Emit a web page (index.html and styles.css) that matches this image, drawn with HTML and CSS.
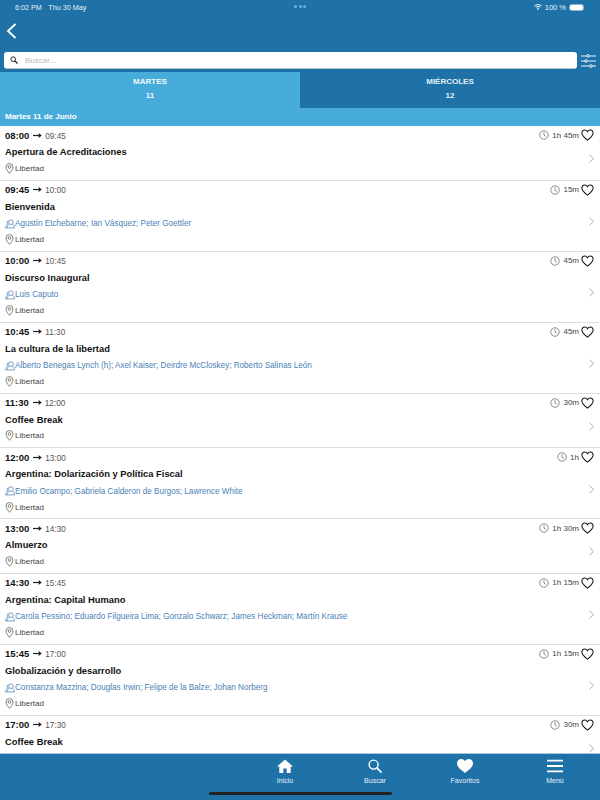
FILE: index.html
```html
<!DOCTYPE html>
<html lang="es">
<head>
<meta charset="utf-8">
<title>Agenda</title>
<link rel="stylesheet" href="styles.css">
</head>
<body>
<svg class="defs" width="0" height="0" aria-hidden="true">
  <symbol id="clock" viewBox="0 0 12 12"><circle cx="6" cy="6" r="5.100" fill="none" stroke="#555" stroke-width=".8"/><path d="M6 2.600V6.200L8.200 7.800" fill="none" stroke="#555" stroke-width=".8"/></symbol>
  <symbol id="heart" viewBox="0 0 14 13"><path d="M7 12C3 8.900 1 7 .9 4.500.8 2.500 2.200 1 4 1c1.300 0 2.400.7 3 1.900C7.600 1.700 8.700 1 10 1c1.800 0 3.200 1.500 3.100 3.500C13 7 11 8.900 7 12Z" fill="none" stroke="#111" stroke-width="1.100"/></symbol>
  <symbol id="pin" viewBox="0 0 9 12"><path d="M4.500 11.300C2.300 8.600.7 6.700.7 4.400a3.800 3.800 0 0 1 7.600 0c0 2.300-1.600 4.200-3.800 6.900Z" fill="none" stroke="#555" stroke-width=".8"/><circle cx="4.500" cy="4.300" r="1.500" fill="none" stroke="#555" stroke-width=".8"/></symbol>
  <symbol id="people" viewBox="0 0 11 11"><g fill="none" stroke="#4a7fb5" stroke-width=".8"><circle cx="6.500" cy="3.500" r="2.600"/><path d="M4.800 5.700C3.300 6.500 2.700 7.700 2.500 9.800H10.500C10.300 7.700 9.700 6.500 8.200 5.700"/><path d="M3.600 1.500C2.200 2.300 2 4.600 3.200 5.400 1.600 6.200.8 7.500.6 9.800H2.500"/></g></symbol>
  <symbol id="arrow" viewBox="0 0 9 7"><path d="M0 3.500H7" stroke="#222" stroke-width="1.200"/><path d="M5.600 1 8.800 3.500 5.600 6Z" fill="#222"/></symbol>
  <symbol id="chev" viewBox="0 0 5 9"><path d="M.6.6 4.400 4.500.6 8.400" fill="none" stroke="#999" stroke-width=".8"/></symbol>
</svg>
<div class="screen">
  <header class="top">
    <div class="status">
      <div class="status-left"><span>6:02 PM</span><span>Thu 30 May</span></div>
      <div class="dots"><i></i><i></i><i></i></div>
      <div class="status-right">
        <svg class="wifi" viewBox="0 0 12 9"><g fill="none" stroke="#fff" stroke-width="1.500"><path d="M.7 3.100C3.700.2 8.300.2 11.300 3.100"/><path d="M2.700 5.100C4.600 3.400 7.400 3.400 9.300 5.100"/></g><path d="M6 9 4.300 7C5.300 6.200 6.700 6.200 7.700 7Z" fill="#fff"/></svg>
        <span>100 %</span>
        <span class="battery"><b></b></span>
      </div>
    </div>
    <div class="nav">
      <svg class="back" viewBox="0 0 11 16"><path d="M9.500 1 2 8l7.500 7" fill="none" stroke="#fff" stroke-width="1.800"/></svg>
    </div>
    <div class="searchrow">
      <div class="search">
        <svg class="lens" viewBox="0 0 9 9"><circle cx="3.600" cy="3.600" r="2.600" fill="none" stroke="#222" stroke-width="1.100"/><path d="M5.500 5.500 8.500 8.500" stroke="#222" stroke-width="1.400"/></svg>
        <span class="placeholder">Buscar...</span>
      </div>
      <svg class="sliders" viewBox="0 0 15 14"><g stroke="#fff" stroke-width=".9" fill="#1f72a8"><path d="M0 2H15M0 7H15M0 12H15"/><circle cx="7" cy="1.900" r="1.300"/><circle cx="5" cy="7" r="1.300"/><circle cx="10" cy="12.100" r="1.300"/></g></svg>
    </div>
  </header>
  <nav class="tabs">
    <div class="tab active"><span>MARTES</span><span>11</span></div>
    <div class="tab"><span>MIÉRCOLES</span><span>12</span></div>
  </nav>
  <div class="dayhead">Martes 11 de Junio</div>
  <main class="list">
    <article class="row">
      <div class="times"><b>08:00</b><svg class="arrow"><use href="#arrow"/></svg><span>09:45</span><div class="dur"><svg class="clock"><use href="#clock"/></svg><span>1h 45m</span><svg class="heart"><use href="#heart"/></svg></div></div>
      <div class="body"><div class="info"><h3>Apertura de Acreditaciones</h3><p class="place"><svg class="pin"><use href="#pin"/></svg>Libertad</p></div><svg class="chev"><use href="#chev"/></svg></div>
    </article>
    <article class="row">
      <div class="times"><b>09:45</b><svg class="arrow"><use href="#arrow"/></svg><span>10:00</span><div class="dur"><svg class="clock"><use href="#clock"/></svg><span>15m</span><svg class="heart"><use href="#heart"/></svg></div></div>
      <div class="body"><div class="info"><h3>Bienvenida</h3><p class="who"><svg class="people"><use href="#people"/></svg>Agustín Etchebarne; Ian Vásquez; Peter Goettler</p><p class="place"><svg class="pin"><use href="#pin"/></svg>Libertad</p></div><svg class="chev"><use href="#chev"/></svg></div>
    </article>
    <article class="row">
      <div class="times"><b>10:00</b><svg class="arrow"><use href="#arrow"/></svg><span>10:45</span><div class="dur"><svg class="clock"><use href="#clock"/></svg><span>45m</span><svg class="heart"><use href="#heart"/></svg></div></div>
      <div class="body"><div class="info"><h3>Discurso Inaugural</h3><p class="who"><svg class="people"><use href="#people"/></svg>Luis Caputo</p><p class="place"><svg class="pin"><use href="#pin"/></svg>Libertad</p></div><svg class="chev"><use href="#chev"/></svg></div>
    </article>
    <article class="row">
      <div class="times"><b>10:45</b><svg class="arrow"><use href="#arrow"/></svg><span>11:30</span><div class="dur"><svg class="clock"><use href="#clock"/></svg><span>45m</span><svg class="heart"><use href="#heart"/></svg></div></div>
      <div class="body"><div class="info"><h3>La cultura de la libertad</h3><p class="who"><svg class="people"><use href="#people"/></svg>Alberto Benegas Lynch (h); Axel Kaiser; Deirdre McCloskey; Roberto Salinas León</p><p class="place"><svg class="pin"><use href="#pin"/></svg>Libertad</p></div><svg class="chev"><use href="#chev"/></svg></div>
    </article>
    <article class="row">
      <div class="times"><b>11:30</b><svg class="arrow"><use href="#arrow"/></svg><span>12:00</span><div class="dur"><svg class="clock"><use href="#clock"/></svg><span>30m</span><svg class="heart"><use href="#heart"/></svg></div></div>
      <div class="body"><div class="info"><h3>Coffee Break</h3><p class="place"><svg class="pin"><use href="#pin"/></svg>Libertad</p></div><svg class="chev"><use href="#chev"/></svg></div>
    </article>
    <article class="row">
      <div class="times"><b>12:00</b><svg class="arrow"><use href="#arrow"/></svg><span>13:00</span><div class="dur"><svg class="clock"><use href="#clock"/></svg><span>1h</span><svg class="heart"><use href="#heart"/></svg></div></div>
      <div class="body"><div class="info"><h3>Argentina: Dolarización y Política Fiscal</h3><p class="who"><svg class="people"><use href="#people"/></svg>Emilio Ocampo; Gabriela Calderon de Burgos; Lawrence White</p><p class="place"><svg class="pin"><use href="#pin"/></svg>Libertad</p></div><svg class="chev"><use href="#chev"/></svg></div>
    </article>
    <article class="row">
      <div class="times"><b>13:00</b><svg class="arrow"><use href="#arrow"/></svg><span>14:30</span><div class="dur"><svg class="clock"><use href="#clock"/></svg><span>1h 30m</span><svg class="heart"><use href="#heart"/></svg></div></div>
      <div class="body"><div class="info"><h3>Almuerzo</h3><p class="place"><svg class="pin"><use href="#pin"/></svg>Libertad</p></div><svg class="chev"><use href="#chev"/></svg></div>
    </article>
    <article class="row">
      <div class="times"><b>14:30</b><svg class="arrow"><use href="#arrow"/></svg><span>15:45</span><div class="dur"><svg class="clock"><use href="#clock"/></svg><span>1h 15m</span><svg class="heart"><use href="#heart"/></svg></div></div>
      <div class="body"><div class="info"><h3>Argentina: Capital Humano</h3><p class="who"><svg class="people"><use href="#people"/></svg>Carola Pessino; Eduardo Filgueira Lima; Gonzalo Schwarz; James Heckman; Martín Krause</p><p class="place"><svg class="pin"><use href="#pin"/></svg>Libertad</p></div><svg class="chev"><use href="#chev"/></svg></div>
    </article>
    <article class="row">
      <div class="times"><b>15:45</b><svg class="arrow"><use href="#arrow"/></svg><span>17:00</span><div class="dur"><svg class="clock"><use href="#clock"/></svg><span>1h 15m</span><svg class="heart"><use href="#heart"/></svg></div></div>
      <div class="body"><div class="info"><h3>Globalización y desarrollo</h3><p class="who"><svg class="people"><use href="#people"/></svg>Constanza Mazzina; Douglas Irwin; Felipe de la Balze; Johan Norberg</p><p class="place"><svg class="pin"><use href="#pin"/></svg>Libertad</p></div><svg class="chev"><use href="#chev"/></svg></div>
    </article>
    <article class="row">
      <div class="times"><b>17:00</b><svg class="arrow"><use href="#arrow"/></svg><span>17:30</span><div class="dur"><svg class="clock"><use href="#clock"/></svg><span>30m</span><svg class="heart"><use href="#heart"/></svg></div></div>
      <div class="body"><div class="info"><h3>Coffee Break</h3><p class="place"></p></div><svg class="chev"><use href="#chev"/></svg></div>
    </article>
  </main>
  <footer class="foot">
    <div class="foot-tab">
      <svg viewBox="0 0 16 14" class="ico"><path d="M8 .5 0 7.500h2.300V14h4V9.500h3.400V14h4V7.500H16Z" fill="#fff"/></svg><span>Inicio</span>
    </div>
    <div class="foot-tab">
      <svg viewBox="0 0 15 15" class="ico"><circle cx="6" cy="6" r="4.800" fill="none" stroke="#fff" stroke-width="1.500"/><path d="M9.500 9.500 14.500 14.500" stroke="#fff" stroke-width="1.800"/></svg><span>Buscar</span>
    </div>
    <div class="foot-tab">
      <svg viewBox="0 0 16 14" class="ico"><path d="M8 14C3 10.200 0 7.800 0 4.300 0 1.800 1.900 0 4.200 0 5.800 0 7.200.8 8 2.200 8.800.8 10.200 0 11.800 0 14.100 0 16 1.800 16 4.300 16 7.800 13 10.200 8 14Z" fill="#fff"/></svg><span>Favoritos</span>
    </div>
    <div class="foot-tab">
      <svg viewBox="0 0 15 12" class="ico"><path d="M0 1H15M0 6H15M0 11H15" stroke="#fff" stroke-width="1.700"/></svg><span>Menú</span>
    </div>
    <div class="homebar"></div>
  </footer>
</div>
</body>
</html>
```
FILE: styles.css
```css
* { box-sizing: border-box; }
html, body { margin: 0; padding: 0; }
body { font-family: "Liberation Sans", Arial, sans-serif; background: #fff; }
.defs { position: absolute; }
.screen { width: 600px; height: 800px; display: flex; flex-direction: column; overflow: hidden; }

.top { background: #1f72a8; height: 72px; flex: none; color: #fff; }
.status { height: 14px; display: flex; align-items: center; justify-content: space-between; padding: 0 8px 0 15px; font-size: 7.200px; position: relative; color: #e8f1f7; }
.status-left { display: flex; gap: 6.500px; }
.dots { position: absolute; left: 294px; top: 5px; display: flex; gap: 1.500px; }
.dots i { width: 3px; height: 3px; border-radius: 50%; background: #6db5e0; }
.status-right { display: flex; align-items: center; gap: 3px; padding-right: 8px; font-size: 7.500px; }
.wifi { width: 8px; height: 6px; }
.battery { width: 15px; height: 7px; border: 1px solid #8fb6d2; border-radius: 2.500px; display: block; }
.battery b { display: block; height: 100%; background: #fff; border-radius: 1.500px; }
.nav { height: 38px; padding: 0 0 5px 6px; display: flex; align-items: center; }
.back { width: 11px; height: 16px; }
.searchrow { height: 17px; margin-bottom: 3px; display: flex; align-items: center; padding-left: 4px; gap: 4px; }
.search { width: 573px; height: 17px; background: #fff; border-radius: 3px; border-bottom: 1px solid #b8c4d0; display: flex; align-items: center; padding-left: 6px; }
.lens { width: 8px; height: 8px; }
.placeholder { font-size: 8px; color: #bbb; margin-left: 7px; }
.sliders { width: 15px; height: 14px; }

.tabs { display: flex; height: 36px; flex: none; background: #1f72a8; }
.tab { width: 300px; display: flex; flex-direction: column; align-items: center; color: #e6eff6; font-size: 8px; font-weight: 700; padding-top: 5px; line-height: 9px; gap: 5px; }
.tab.active { background: #47acd9; color: #f1f8fc; }
.dayhead { height: 18px; flex: none; background: #47acd9; color: #fff; font-size: 8px; font-weight: 700; line-height: 17px; padding-left: 5px; }

.list { flex: 1; overflow: hidden; background: #fff; min-height: 0; }
.row { border-bottom: 1px solid #ddd; padding: 0 6px 3px 5px; }
.times { height: 18px; display: flex; align-items: center; font-size: 8.200px; color: #555; }
.times > span { margin-top: 2px; }
.times b { font-size: 9.500px; color: #111; font-weight: 700; }
.arrow { width: 9px; height: 7px; margin: 0 3px 0 4px; }
.dur { margin-left: auto; display: flex; align-items: center; color: #444; font-size: 8px; }
.clock { width: 10px; height: 10px; margin-right: 3px; }
.heart { width: 13px; height: 12px; margin-left: 2px; }
.body { display: flex; align-items: center; }
.info { flex: 1; min-width: 0; }
.row h3 { margin: 0; padding-top: 1px; font-size: 9.350px; font-weight: 700; color: #111; line-height: 14px; }
.who, .place { margin: 0; display: flex; align-items: center; font-size: 8.150px; height: 16px; }
.who { color: #4a7fb5; margin-top: 2px; }
.place { color: #444; font-size: 8px; }
h3 + .place { margin-top: 1px; margin-bottom: .6px; }
.pin { width: 9px; height: 11px; margin-right: 1px; flex: none; }
.people { width: 10px; height: 10px; flex: none; }
.chev { width: 5px; height: 9px; margin: 0 0 3px; flex: none; }

.foot { height: 47px; flex: none; background: #1f72a8; border-top: 1px solid #a9c6da; display: flex; padding: 5px 0 0 240px; position: relative; }
.foot-tab { width: 90px; display: flex; flex-direction: column; align-items: center; color: #e6eff6; font-size: 7px; gap: 4px; }
.ico { height: 14px; width: 16px; }
.homebar { position: absolute; left: 209px; bottom: 5px; width: 183px; height: 3px; border-radius: 2px; background: #222; }
```
